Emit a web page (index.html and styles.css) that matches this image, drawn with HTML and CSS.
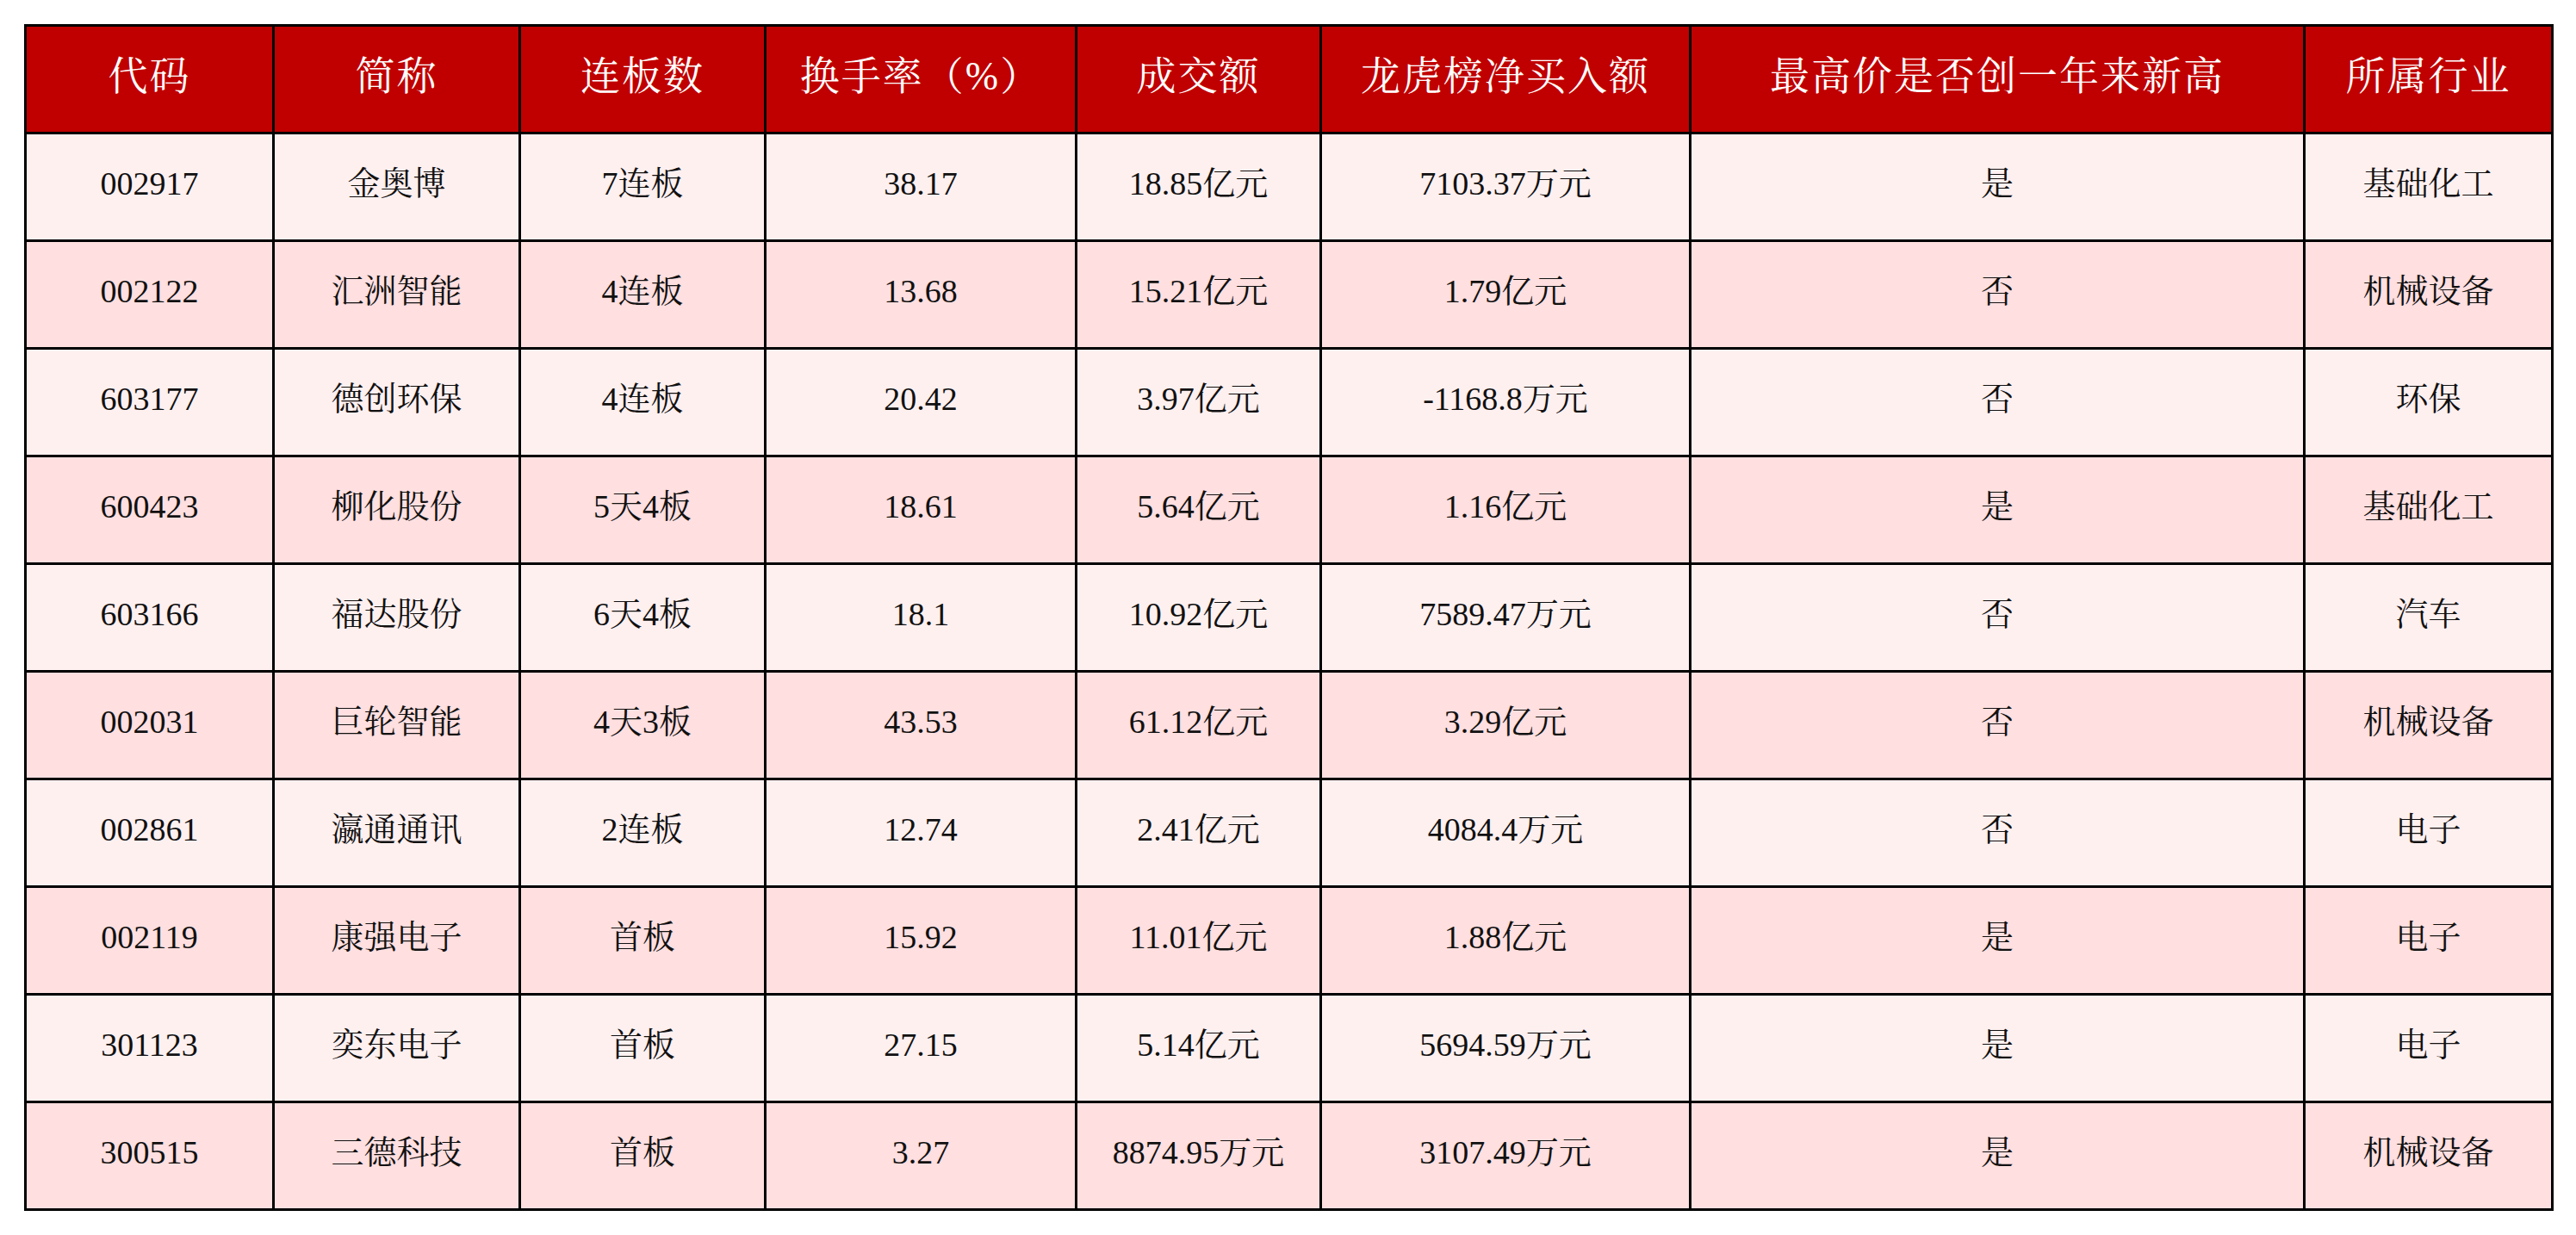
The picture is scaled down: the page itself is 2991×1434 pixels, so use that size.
FILE: index.html
```html
<!DOCTYPE html>
<html lang="zh-CN">
<head>
<meta charset="utf-8">
<title>连板股</title>
<link rel="stylesheet" href="styles.css">
</head>
<body>
<table class="board">
  <colgroup>
    <col class="c1"><col class="c2"><col class="c3"><col class="c4"><col class="c5"><col class="c6"><col class="c7"><col class="c8">
  </colgroup>
  <thead>
    <tr class="head">
      <th>代码</th><th>简称</th><th>连板数</th><th>换手率（%）</th><th>成交额</th><th>龙虎榜净买入额</th><th>最高价是否创一年来新高</th><th>所属行业</th>
    </tr>
  </thead>
  <tbody>
    <tr class="odd"><td>002917</td><td>金奥博</td><td>7连板</td><td>38.17</td><td>18.85亿元</td><td>7103.37万元</td><td>是</td><td>基础化工</td></tr>
    <tr class="even"><td>002122</td><td>汇洲智能</td><td>4连板</td><td>13.68</td><td>15.21亿元</td><td>1.79亿元</td><td>否</td><td>机械设备</td></tr>
    <tr class="odd"><td>603177</td><td>德创环保</td><td>4连板</td><td>20.42</td><td>3.97亿元</td><td>-1168.8万元</td><td>否</td><td>环保</td></tr>
    <tr class="even"><td>600423</td><td>柳化股份</td><td>5天4板</td><td>18.61</td><td>5.64亿元</td><td>1.16亿元</td><td>是</td><td>基础化工</td></tr>
    <tr class="odd"><td>603166</td><td>福达股份</td><td>6天4板</td><td>18.1</td><td>10.92亿元</td><td>7589.47万元</td><td>否</td><td>汽车</td></tr>
    <tr class="even"><td>002031</td><td>巨轮智能</td><td>4天3板</td><td>43.53</td><td>61.12亿元</td><td>3.29亿元</td><td>否</td><td>机械设备</td></tr>
    <tr class="odd"><td>002861</td><td>瀛通通讯</td><td>2连板</td><td>12.74</td><td>2.41亿元</td><td>4084.4万元</td><td>否</td><td>电子</td></tr>
    <tr class="even"><td>002119</td><td>康强电子</td><td>首板</td><td>15.92</td><td>11.01亿元</td><td>1.88亿元</td><td>是</td><td>电子</td></tr>
    <tr class="odd"><td>301123</td><td>奕东电子</td><td>首板</td><td>27.15</td><td>5.14亿元</td><td>5694.59万元</td><td>是</td><td>电子</td></tr>
    <tr class="even"><td>300515</td><td>三德科技</td><td>首板</td><td>3.27</td><td>8874.95万元</td><td>3107.49万元</td><td>是</td><td>机械设备</td></tr>
  </tbody>
</table>
</body>
</html>
```
FILE: styles.css
```css
html, body {
  margin: 0;
  padding: 0;
  background: #ffffff;
}
body {
  padding: 28px 0 0 28px;
  font-family: "Liberation Serif", "Noto Serif CJK SC", "Noto Sans CJK SC", serif;
}
.board {
  border-collapse: collapse;
  table-layout: fixed;
  width: 2934px;
}
.c1 { width: 288px; }
.c2 { width: 286px; }
.c3 { width: 285px; }
.c4 { width: 361px; }
.c5 { width: 284px; }
.c6 { width: 429px; }
.c7 { width: 713px; }
.c8 { width: 288px; }
.board th,
.board td {
  border: 3px solid #000000;
  text-align: center;
  vertical-align: middle;
  padding: 0 0 6px 0;
  white-space: nowrap;
  line-height: 1.2;
}
.head th {
  height: 116px;
  background: #c00000;
  color: #ffffff;
  font-weight: normal;
  font-size: 46px;
  letter-spacing: 2px;
}
.board td {
  height: 116px;
  font-size: 38px;
  color: #111111;
}
.odd td { background: #fff0f0; }
.even td { background: #ffdfe0; }
```
